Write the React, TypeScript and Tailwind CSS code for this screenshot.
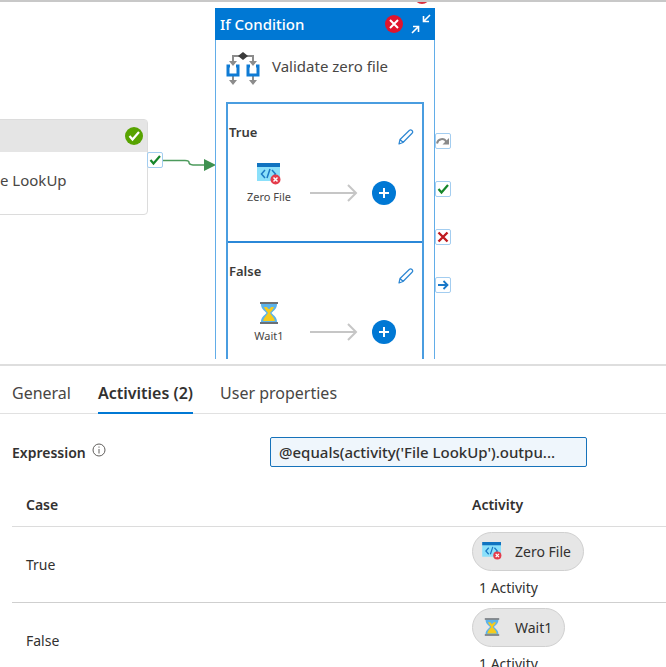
import type { ReactNode } from "react";

function BranchIcon() {
  return (
    <svg viewBox="0 0 34 34" className="h-[34px] w-[34px] shrink-0" fill="none" aria-hidden="true">
      <path d="M7 10V4h20v6M7 22v8M27 22v8" stroke="#8c8c8c" strokeWidth="2" />
      <path d="M3 9h8l-4 5zM23 9h8l-4 5zM3 28h8l-4 5zM23 28h8l-4 5z" fill="#8c8c8c" />
      <path d="M17 0l5 4-5 4-5-4z" fill="#3c3c3c" />
      <path d="M4 14H2v9h10v-9h-2M24 14h-2v9h10v-9h-2" stroke="#0f7bd4" strokeWidth="3" />
    </svg>
  );
}

function ScriptIcon({ className }: { className: string }) {
  return (
    <svg viewBox="0 0 24 22" className={className} fill="none" aria-hidden="true">
      <path d="M0 3h23v15H0z" fill="#8be0fa" />
      <path d="M0 0h23v4H0z" fill="#1073c0" />
      <path d="M8 7l-3.500 4L8 15M15 7l3.500 4L15 15M13 6l-3 9" stroke="#1b79c4" strokeWidth="1.500" />
      <circle cx="18.500" cy="16.500" r="5" fill="#e43c4b" />
      <path d="M16.500 14.500l4 4M20.500 14.500l-4 4" stroke="#fff" strokeWidth="1.500" />
    </svg>
  );
}

function HourglassIcon({ className }: { className: string }) {
  return (
    <svg viewBox="0 0 20 22" className={className} fill="none" aria-hidden="true">
      <path d="M2 2h16c0 5-3 6-5.500 9C15 14 18 15 18 20H2c0-5 3-6 5.500-9C5 8 2 7 2 2z" fill="#5cb3ea" />
      <path d="M5 5h10c-1 3-3 4-4 6 1 2 4 4 5 8H4c1-4 4-6 5-8-1-2-3-3-4-6z" fill="#f6cb1c" />
      <path d="M6.500 3.500h7l-3.500 4z" fill="#5cb3ea" />
      <path d="M1 0h18v2H1zM1 20h18v2H1z" fill="#6b7075" />
    </svg>
  );
}

function PencilIcon() {
  return (
    <svg viewBox="0 0 16 16" className="h-4 w-4" fill="none" stroke="#2d87d3" strokeWidth="1.200" strokeLinejoin="round" aria-hidden="true">
      <path d="M1 15l1-4.500L11.500 1.200c.8-.6 1.800-.4 2.500.3s.9 1.700.3 2.500L5 13.500zM2 10.500l3.200 3" />
    </svg>
  );
}

function CheckIcon({ color }: { color: string }) {
  return (
    <svg viewBox="0 0 12 12" className="h-3 w-3" fill="none" aria-hidden="true">
      <path d="M1.500 6l3 3.500L11 2" stroke={color} strokeWidth="2.200" />
    </svg>
  );
}

function LongArrow() {
  return (
    <svg viewBox="0 0 48 18" className="h-[18px] w-12" fill="none" stroke="#c6c6c6" strokeWidth="2" aria-hidden="true">
      <path d="M0 9h46M38 1l8 8-8 8" />
    </svg>
  );
}

function Port({ label, children }: { label: string; children: ReactNode }) {
  return (
    <button aria-label={label} className="flex h-4 w-4 items-center justify-center rounded-xs border border-[#a3cdf0] bg-white">
      {children}
    </button>
  );
}

function Branch({ title, activity, icon }: { title: string; activity: string; icon: ReactNode }) {
  return (
    <section className="h-[139px] border-b-2 border-[#2b88d8] pt-[18px]">
      <div className="flex items-start justify-between pr-2 pl-px">
        <h3 className="text-[13px] leading-5 font-semibold text-[#3b3a39]">{title}</h3>
        <button aria-label={`Edit ${title} branch`} className="pt-[7px]">
          <PencilIcon />
        </button>
      </div>
      <div className="flex pt-[18px]">
        <div className="flex w-[82px] flex-col items-center">
          {icon}
          <span className="pt-1 text-[11px] leading-4 text-[#484644]">{activity}</span>
        </div>
        <div className="flex h-[60px] items-center gap-3.5">
          <LongArrow />
          <button aria-label={`Add activity to ${title}`} className="flex h-6 w-6 items-center justify-center rounded-full bg-[#0078d4]">
            <svg viewBox="0 0 12 12" className="h-3 w-3" aria-hidden="true">
              <path d="M6 1v10M1 6h10" stroke="#fff" strokeWidth="2" />
            </svg>
          </button>
        </div>
      </div>
    </section>
  );
}

function Canvas() {
  return (
    <div className="relative h-[359px] shrink-0 overflow-hidden border-t-2 border-[#c8c8c8]">
      <span className="absolute -top-[14px] left-[414px] h-4 w-4 rounded-full border-2 border-[#d9303e]" />

      <article className="absolute top-[117px] left-[-72px] h-24 w-[220px] rounded-sm border border-[#dcdcdc] bg-white">
        <header className="flex h-8 items-center justify-end bg-[#e5e5e5] pr-1">
          <span className="flex h-[18px] w-[18px] items-center justify-center rounded-full bg-[#57a300]">
            <CheckIcon color="#fff" />
          </span>
        </header>
        <p className="pt-3.5 pl-[71px] text-[15px] leading-7 text-[#484644]">e LookUp</p>
      </article>

      <div className="absolute top-[150px] left-[147px]">
        <Port label="On success">
          <CheckIcon color="#16862a" />
        </Port>
      </div>
      <svg viewBox="0 0 54 14" className="absolute top-[156px] left-[163px] h-3.5 w-[54px]" fill="none" aria-hidden="true">
        <path d="M0 2.500h22q4 0 4 2t4 2.500h12" stroke="#4c9a5c" strokeWidth="1.500" />
        <path d="M41 1l12 6-12 6z" fill="#3f9150" />
      </svg>

      <article className="absolute top-1.5 left-[215px] h-[460px] w-[220px] border border-[#62ade8] bg-white">
        <header className="-mx-px -mt-px flex h-8 items-center bg-[#0078d4] pr-1 pl-[5px] text-white">
          <h2 className="flex-1 text-[15px] leading-5 font-medium">If Condition</h2>
          <span className="mr-2 flex h-[18px] w-[18px] items-center justify-center rounded-full bg-[#e0142c]">
            <svg viewBox="0 0 10 10" className="h-2.5 w-2.5" aria-hidden="true">
              <path d="M1 1l8 8M9 1l-8 8" stroke="#fff" strokeWidth="2" />
            </svg>
          </span>
          <button aria-label="Collapse">
            <svg viewBox="0 0 20 20" className="h-5 w-5" fill="none" stroke="#fff" strokeWidth="1.600" aria-hidden="true">
              <path d="M19 1l-6 6M12.500 2v5.500H18M1 19l6-6M7.500 18v-5.500H2" />
            </svg>
          </button>
        </header>
        <div className="flex h-[62px] items-start gap-3 pt-3 pl-2.5">
          <BranchIcon />
          <p className="text-[15px] leading-7 text-[#484644]">Validate zero file</p>
        </div>
        <div className="mr-2.5 ml-2.5 border-2 border-[#4a9de0]">
          <Branch title="True" activity="Zero File" icon={<ScriptIcon className="h-[22px] w-6" />} />
          <Branch title="False" activity="Wait1" icon={<HourglassIcon className="h-[22px] w-5" />} />
        </div>
      </article>

      <div className="absolute top-[131px] left-[435px] flex flex-col gap-8">
        <Port label="On skip">
          <svg viewBox="0 0 14 12" className="h-3 w-3.5" fill="none" aria-hidden="true">
            <path d="M1 8.500c1-5 7-6 9.500-1.500" stroke="#8a8a8a" strokeWidth="2" />
            <path d="M13 3v6.500H6.500z" fill="#8a8a8a" />
          </svg>
        </Port>
        <Port label="On success">
          <CheckIcon color="#16862a" />
        </Port>
        <Port label="On failure">
          <svg viewBox="0 0 12 12" className="h-3 w-3" aria-hidden="true">
            <path d="M1.500 1.500l9 9M10.500 1.500l-9 9" stroke="#bf1a1f" strokeWidth="2.400" />
          </svg>
        </Port>
        <Port label="On completion">
          <svg viewBox="0 0 12 12" className="h-3 w-3" fill="none" stroke="#1a78c8" strokeWidth="1.800" aria-hidden="true">
            <path d="M1 6h9M6.500 2l4 4-4 4" />
          </svg>
        </Port>
      </div>
    </div>
  );
}

function ActivityRow({ name, activity, icon }: { name: string; activity: string; icon: ReactNode }) {
  return (
    <tr className="h-[76px] border-b border-[#cfcfcf]">
      <td className="pl-3.5 align-middle">{name}</td>
      <td className="pt-[5px] align-top">
        <button className="flex h-[39px] items-center rounded-full border border-[#d0d0d0] bg-[#e6e6e6] pr-3 pl-2 text-[14px]">
          <span className="mr-3 flex w-[22px] justify-center">{icon}</span>
          {activity}
        </button>
        <p className="pt-[5px] pl-[7px] leading-6">1 Activity</p>
      </td>
    </tr>
  );
}

export default function App() {
  return (
    <div className="flex h-screen flex-col overflow-hidden bg-white font-['Noto_Sans','Open_Sans',sans-serif] text-[#323130]">
      <Canvas />
      <main className="mt-[5px] border-t-2 border-[#dedede]">
        <nav role="tablist" className="flex h-12 gap-[27px] border-b border-[#e1e1e1] pl-3 text-[16px]">
          <button role="tab" aria-selected="false" className="pt-2 pb-0.5 text-[#484644]">General</button>
          <button role="tab" aria-selected="true" className="-mb-px border-b-2 border-[#0078d4] pt-2 font-semibold">
            Activities (2)
          </button>
          <button role="tab" aria-selected="false" className="pt-2 pb-0.5 text-[#484644]">User properties</button>
        </nav>
        <div className="flex items-center pt-[23px] pl-3">
          <label htmlFor="expression" className="pt-0.5 text-[14px] leading-5 font-semibold">Expression</label>
          <svg viewBox="0 0 14 14" className="mb-1 ml-1.5 h-3.5 w-3.5" fill="none" stroke="#605e5c" aria-hidden="true">
            <circle cx="7" cy="7" r="6" />
            <path d="M7 6v4.500M7 3.500v1.200" />
          </svg>
          <input
            id="expression"
            readOnly
            defaultValue="@equals(activity('File LookUp').outpu..."
            className="ml-auto mr-[79px] h-[30px] w-[317px] rounded-xs border border-[#1672ba] bg-[#eff6fc] px-2 text-[15px] font-medium outline-none"
          />
        </div>
        <div className="pt-[17px] pl-3">
          <table className="w-full table-fixed border-collapse text-left text-[14px]">
            <thead>
              <tr className="h-[42px] border-b border-[#dcdcdc]">
                <th scope="col" className="pl-3.5 font-semibold">Case</th>
                <th scope="col" className="w-[194px] font-semibold">Activity</th>
              </tr>
            </thead>
            <tbody>
              <ActivityRow name="True" activity="Zero File" icon={<ScriptIcon className="h-[18px] w-5" />} />
              <ActivityRow name="False" activity="Wait1" icon={<HourglassIcon className="h-[18px] w-4" />} />
            </tbody>
          </table>
        </div>
      </main>
    </div>
  );
}
